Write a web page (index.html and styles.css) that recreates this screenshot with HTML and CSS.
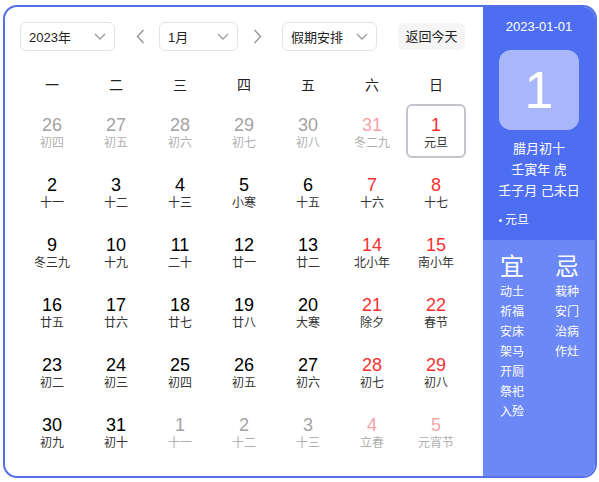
FILE: index.html
```html
<!DOCTYPE html>
<html lang="zh-CN">
<head>
<meta charset="utf-8">
<title>万年历</title>
<link rel="stylesheet" href="styles.css">
</head>
<body>
<div class="cal">
  <div class="main">
    <div class="toolbar">
      <div class="select sel-year"><span>2023年</span><svg class="chev" width="12" height="7" viewBox="0 0 12 7"><polyline points="1,1 6,6 11,1" fill="none" stroke="#9a9a9a" stroke-width="1.3"/></svg></div>
      <div class="arrow prev"><svg width="9" height="15" viewBox="0 0 9 15"><polyline points="7.5,1 1.5,7.5 7.5,14" fill="none" stroke="#999" stroke-width="1.5"/></svg></div>
      <div class="select sel-month"><span>1月</span><svg class="chev" width="12" height="7" viewBox="0 0 12 7"><polyline points="1,1 6,6 11,1" fill="none" stroke="#9a9a9a" stroke-width="1.3"/></svg></div>
      <div class="arrow next"><svg width="9" height="15" viewBox="0 0 9 15"><polyline points="1.5,1 7.5,7.5 1.5,14" fill="none" stroke="#999" stroke-width="1.5"/></svg></div>
      <div class="select sel-holiday"><span>假期安排</span><svg class="chev" width="12" height="7" viewBox="0 0 12 7"><polyline points="1,1 6,6 11,1" fill="none" stroke="#9a9a9a" stroke-width="1.3"/></svg></div>
      <div class="today-btn">返回今天</div>
    </div>
    <div class="weekdays">
      <div>一</div><div>二</div><div>三</div><div>四</div><div>五</div><div>六</div><div>日</div>
    </div>
    <div class="grid">
      <div class="day other"><div class="num">26</div><div class="lunar">初四</div></div>
      <div class="day other"><div class="num">27</div><div class="lunar">初五</div></div>
      <div class="day other"><div class="num">28</div><div class="lunar">初六</div></div>
      <div class="day other"><div class="num">29</div><div class="lunar">初七</div></div>
      <div class="day other"><div class="num">30</div><div class="lunar">初八</div></div>
      <div class="day other weekend"><div class="num">31</div><div class="lunar">冬二九</div></div>
      <div class="day weekend selected"><div class="num">1</div><div class="lunar">元旦</div></div>

      <div class="day"><div class="num">2</div><div class="lunar">十一</div></div>
      <div class="day"><div class="num">3</div><div class="lunar">十二</div></div>
      <div class="day"><div class="num">4</div><div class="lunar">十三</div></div>
      <div class="day"><div class="num">5</div><div class="lunar">小寒</div></div>
      <div class="day"><div class="num">6</div><div class="lunar">十五</div></div>
      <div class="day weekend"><div class="num">7</div><div class="lunar">十六</div></div>
      <div class="day weekend"><div class="num">8</div><div class="lunar">十七</div></div>

      <div class="day"><div class="num">9</div><div class="lunar">冬三九</div></div>
      <div class="day"><div class="num">10</div><div class="lunar">十九</div></div>
      <div class="day"><div class="num">11</div><div class="lunar">二十</div></div>
      <div class="day"><div class="num">12</div><div class="lunar">廿一</div></div>
      <div class="day"><div class="num">13</div><div class="lunar">廿二</div></div>
      <div class="day weekend"><div class="num">14</div><div class="lunar">北小年</div></div>
      <div class="day weekend"><div class="num">15</div><div class="lunar">南小年</div></div>

      <div class="day"><div class="num">16</div><div class="lunar">廿五</div></div>
      <div class="day"><div class="num">17</div><div class="lunar">廿六</div></div>
      <div class="day"><div class="num">18</div><div class="lunar">廿七</div></div>
      <div class="day"><div class="num">19</div><div class="lunar">廿八</div></div>
      <div class="day"><div class="num">20</div><div class="lunar">大寒</div></div>
      <div class="day weekend"><div class="num">21</div><div class="lunar">除夕</div></div>
      <div class="day weekend"><div class="num">22</div><div class="lunar">春节</div></div>

      <div class="day"><div class="num">23</div><div class="lunar">初二</div></div>
      <div class="day"><div class="num">24</div><div class="lunar">初三</div></div>
      <div class="day"><div class="num">25</div><div class="lunar">初四</div></div>
      <div class="day"><div class="num">26</div><div class="lunar">初五</div></div>
      <div class="day"><div class="num">27</div><div class="lunar">初六</div></div>
      <div class="day weekend"><div class="num">28</div><div class="lunar">初七</div></div>
      <div class="day weekend"><div class="num">29</div><div class="lunar">初八</div></div>

      <div class="day"><div class="num">30</div><div class="lunar">初九</div></div>
      <div class="day"><div class="num">31</div><div class="lunar">初十</div></div>
      <div class="day other"><div class="num">1</div><div class="lunar">十一</div></div>
      <div class="day other"><div class="num">2</div><div class="lunar">十二</div></div>
      <div class="day other"><div class="num">3</div><div class="lunar">十三</div></div>
      <div class="day other weekend"><div class="num">4</div><div class="lunar">立春</div></div>
      <div class="day other weekend"><div class="num">5</div><div class="lunar">元宵节</div></div>
    </div>
  </div>
  <div class="side">
    <div class="side-top">
      <div class="side-date">2023-01-01</div>
      <div class="big-day">1</div>
      <div class="side-lunar">
        <div>腊月初十</div>
        <div>壬寅年 虎</div>
        <div>壬子月 己未日</div>
      </div>
      <div class="side-fest"><span class="dot"></span>元旦</div>
    </div>
    <div class="side-bottom">
      <div class="yiji">
        <div class="yj-title">宜</div>
        <div>动土</div><div>祈福</div><div>安床</div><div>架马</div><div>开厕</div><div>祭祀</div><div>入殓</div>
      </div>
      <div class="yiji">
        <div class="yj-title">忌</div>
        <div>栽种</div><div>安门</div><div>治病</div><div>作灶</div>
      </div>
    </div>
  </div>
</div>
</body>
</html>
```

FILE: styles.css
```css
html, body {
  margin: 0;
  padding: 0;
  background: #fff;
}
body {
  font-family: "Liberation Sans", "Noto Sans CJK SC", sans-serif;
  color: #333;
}
.cal {
  box-sizing: border-box;
  width: 594px;
  height: 473px;
  margin: 5px 0 0 3px;
  border: 2px solid #5470e6;
  border-radius: 14px;
  overflow: hidden;
  display: flex;
  background: #fff;
}
.main {
  width: 478px;
  flex: none;
  padding: 15px 0 0 15px;
  box-sizing: border-box;
}
.toolbar {
  display: flex;
  align-items: center;
  height: 29px;
}
.select {
  box-sizing: border-box;
  height: 29px;
  border: 1px solid #e3e3e3;
  border-radius: 6px;
  display: flex;
  align-items: center;
  justify-content: space-between;
  padding: 0 8px 0 8px;
  font-size: 13px;
  color: #222;
}
.sel-year { width: 95px; }
.sel-month { width: 79px; }
.sel-holiday { width: 95px; margin-left: 13px; }
.arrow {
  width: 24px;
  height: 29px;
  display: flex;
  align-items: center;
  justify-content: center;
}
.prev { margin: 0 7px 0 13px; }
.next { margin-left: 7px; }
.today-btn {
  margin-left: 21px;
  width: 67px;
  height: 27px;
  border-radius: 6px;
  background: #f5f5f6;
  font-size: 13px;
  line-height: 27px;
  text-align: center;
  color: #222;
}
.weekdays {
  display: grid;
  grid-template-columns: repeat(7, 64px);
  margin-top: 20px;
  height: 28px;
  line-height: 28px;
  font-size: 14px;
  text-align: center;
  color: #222;
}
.grid {
  display: grid;
  grid-template-columns: repeat(7, 64px);
  grid-auto-rows: 60px;
  padding-top: 2px;
}
.day {
  box-sizing: border-box;
  margin: 3px 2px;
  height: 54px;
  border: 2px solid transparent;
  border-radius: 6px;
  padding-top: 9px;
  text-align: center;
}
.day .num {
  font-size: 18px;
  line-height: 20px;
  color: #000;
}
.day .lunar {
  font-size: 12px;
  line-height: 16px;
  color: #333;
}
.day.weekend .num { color: #f73131; }
.day.other .num { color: #a3a3a3; }
.day.other .lunar { color: #b0b0b0; }
.day.other.weekend .num { color: #f5a3a8; }
.day.selected { border-color: #c3c5cc; }

.side {
  width: 112px;
  flex: none;
  display: flex;
  flex-direction: column;
  color: #fff;
}
.side-top {
  height: 233px;
  background: #4e6ef2;
  text-align: center;
  padding-top: 10px;
  box-sizing: border-box;
}
.side-date {
  font-size: 13px;
  line-height: 20px;
}
.big-day {
  width: 80px;
  height: 80px;
  margin: 13px auto 0;
  border-radius: 12px;
  background: rgba(255, 255, 255, 0.5);
  font-size: 52px;
  line-height: 80px;
}
.side-lunar {
  margin-top: 8px;
  font-size: 13px;
  line-height: 21px;
}
.side-fest {
  margin-top: 11px;
  font-size: 12px;
  line-height: 16px;
  text-align: left;
  padding-left: 16px;
  display: flex;
  align-items: center;
}
.dot {
  width: 3px;
  height: 3px;
  border-radius: 50%;
  background: #fff;
  margin-right: 3px;
}
.side-bottom {
  flex: 1;
  background: #6b88f6;
  display: flex;
  padding: 13px 0 0 17px;
  box-sizing: border-box;
}
.yiji {
  flex: none;
  width: 55px;
  font-size: 12px;
  line-height: 20px;
}
.yj-title {
  font-size: 24px;
  line-height: 28px;
  margin-bottom: 1px;
}
```
